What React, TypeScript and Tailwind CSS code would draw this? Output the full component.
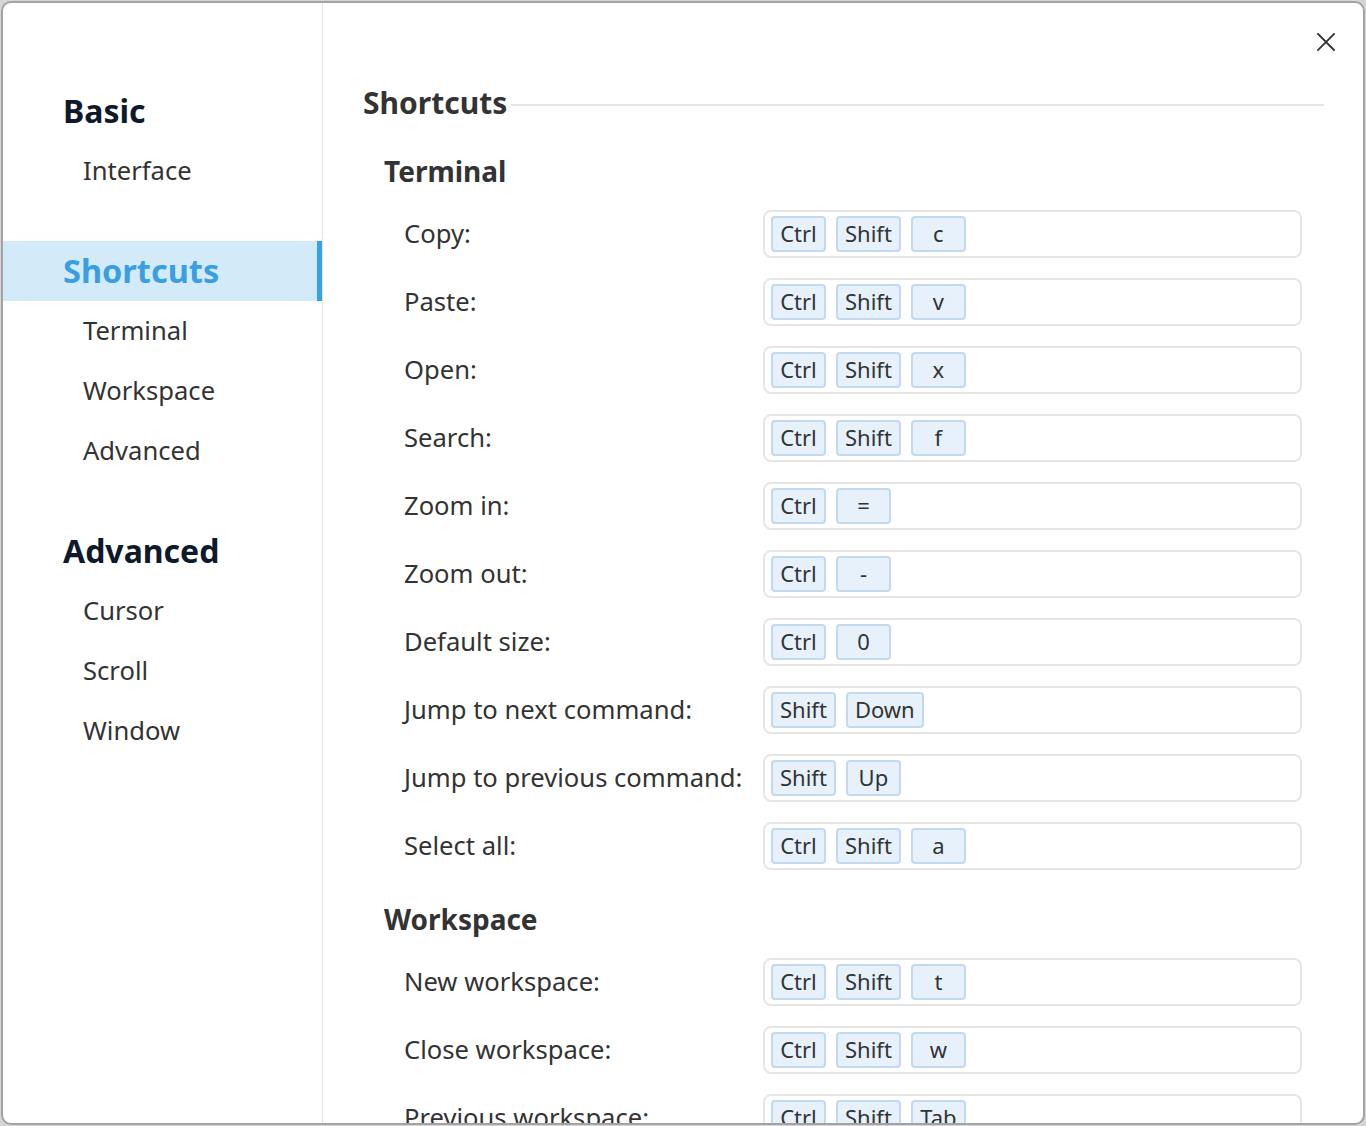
import React from "react";

const font = { fontFamily: '"Noto Sans", "Open Sans", sans-serif' };

type Row = { label: string; keys: string[] };

const terminal: Row[] = [
  { label: "Copy:", keys: ["Ctrl", "Shift", "c"] },
  { label: "Paste:", keys: ["Ctrl", "Shift", "v"] },
  { label: "Open:", keys: ["Ctrl", "Shift", "x"] },
  { label: "Search:", keys: ["Ctrl", "Shift", "f"] },
  { label: "Zoom in:", keys: ["Ctrl", "="] },
  { label: "Zoom out:", keys: ["Ctrl", "-"] },
  { label: "Default size:", keys: ["Ctrl", "0"] },
  { label: "Jump to next command:", keys: ["Shift", "Down"] },
  { label: "Jump to previous command:", keys: ["Shift", "Up"] },
  { label: "Select all:", keys: ["Ctrl", "Shift", "a"] },
];

const workspace: Row[] = [
  { label: "New workspace:", keys: ["Ctrl", "Shift", "t"] },
  { label: "Close workspace:", keys: ["Ctrl", "Shift", "w"] },
  { label: "Previous workspace:", keys: ["Ctrl", "Shift", "Tab"] },
];

function Key({ k }: { k: string }) {
  return (
    <span className="flex h-[36px] min-w-[55px] items-center justify-center rounded-[4px] border-2 border-[#c3daee] bg-[#e6f1fc] px-[7px] pb-[2px] text-[22px] text-[#333]">
      {k}
    </span>
  );
}

function ShortcutRow({ row }: { row: Row }) {
  return (
    <div className="flex items-center pl-[41px]">
      <div className="w-[359px] shrink-0 text-[25.6px] text-[#333]">{row.label}</div>
      <div className="flex h-[48px] w-[539px] items-center gap-[10px] rounded-[8px] border-2 border-[#e6e6e6] px-[6px]">
        {row.keys.map((k, i) => (
          <Key key={i} k={k} />
        ))}
      </div>
    </div>
  );
}

function Section({ title, rows }: { title: string; rows: Row[] }) {
  return (
    <div className="mt-[29px]">
      <div className="flex h-[40px] items-center pl-[21px] text-[28px] font-bold text-[#333]">{title}</div>
      <div className="mt-[19px] flex flex-col gap-[20px]">
        {rows.map((r, i) => (
          <ShortcutRow key={i} row={r} />
        ))}
      </div>
    </div>
  );
}

function SideHeading({ children, active }: { children: React.ReactNode; active?: boolean }) {
  if (active) {
    return (
      <div className="flex h-[60px] items-center border-r-[5px] border-[#36a3e6] bg-[#d3ebf9] pl-[60px] text-[32.5px] font-bold text-[#3a9fe2]">
        {children}
      </div>
    );
  }
  return (
    <div className="flex h-[60px] items-center pl-[60px] text-[32px] font-bold text-[#0e1a2b]">{children}</div>
  );
}

function SideItem({ children }: { children: React.ReactNode }) {
  return <div className="flex h-[60px] items-center pl-[80px] text-[25.6px] text-[#333]">{children}</div>;
}

export default function App() {
  return (
    <div className="h-[1126px] w-[1366px] overflow-hidden bg-[#d6d6d6] p-[1px]" style={font}>
      <div className="relative flex h-[1124px] w-[1364px] overflow-hidden rounded-[10px] border-2 border-[#a3a3a3] bg-white">
        <aside className="w-[320px] shrink-0 border-r border-[#e2e2e2] pt-[78px]">
          <SideHeading>Basic</SideHeading>
          <SideItem>Interface</SideItem>
          <div className="h-[40px]" />
          <SideHeading active>Shortcuts</SideHeading>
          <SideItem>Terminal</SideItem>
          <SideItem>Workspace</SideItem>
          <SideItem>Advanced</SideItem>
          <div className="h-[40px]" />
          <SideHeading>Advanced</SideHeading>
          <SideItem>Cursor</SideItem>
          <SideItem>Scroll</SideItem>
          <SideItem>Window</SideItem>
        </aside>
        <main className="flex-1 pl-[40px] pr-[39px] pt-[79px]">
          <div className="flex h-[40px] items-center">
            <span className="text-[30px] font-bold text-[#333]">Shortcuts</span>
            <div className="ml-[4px] mt-[6px] h-[2px] flex-1 bg-[#e6e6e6]" />
          </div>
          <Section title="Terminal" rows={terminal} />
          <Section title="Workspace" rows={workspace} />
        </main>
        <button className="absolute right-[27px] top-[29px] flex h-[20px] w-[20px] items-center justify-center">
          <svg width="20" height="20" viewBox="0 0 20 20">
            <path d="M2 2 L18 18 M18 2 L2 18" stroke="#333" strokeWidth="1.8" strokeLinecap="square" fill="none" />
          </svg>
        </button>
      </div>
    </div>
  );
}
